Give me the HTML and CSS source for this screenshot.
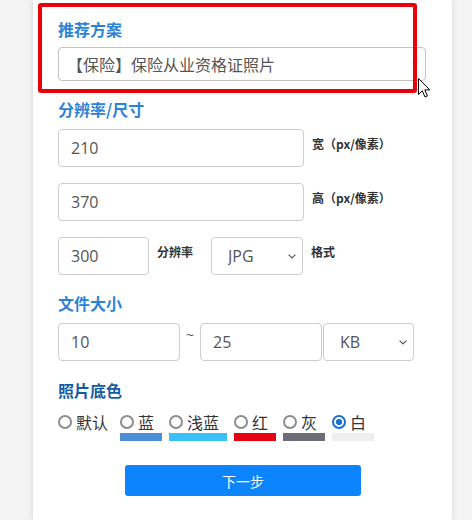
FILE: index.html
```html
<!DOCTYPE html>
<html lang="zh-CN">
<head>
<meta charset="utf-8">
<title>照片参数</title>
<link rel="stylesheet" href="styles.css">
</head>
<body>
<div class="page">
  <div class="card">
    <h2 class="title">推荐方案</h2>
    <div class="sel-wrap plan">
      <select class="sel plan-sel"><option>【保险】保险从业资格证照片</option></select>
      <span class="tri"></span>
    </div>

    <h2 class="title sec">分辨率/尺寸</h2>
    <div class="fields">
      <div class="row">
        <input class="inp w-wide" value="210">
        <span class="lab">宽（px/像素）</span>
      </div>
      <div class="row">
        <input class="inp w-wide" value="370">
        <span class="lab">高（px/像素）</span>
      </div>
      <div class="row">
        <input class="inp w-small" value="300">
        <span class="lab">分辨率</span>
        <div class="sel-wrap small fmt">
          <select class="sel"><option>JPG</option></select>
          <svg class="chev" width="8" height="5" viewBox="0 0 8 5"><path d="M0.6 0.6 L4 4 L7.4 0.6" fill="none" stroke="#555" stroke-width="1.2"/></svg>
        </div>
        <span class="lab">格式</span>
      </div>
    </div>

    <h2 class="title sec">文件大小</h2>
    <div class="row size-row">
      <input class="inp w-mid" value="10">
      <span class="tilde">~</span>
      <input class="inp w-mid" value="25">
      <div class="sel-wrap small unit">
        <select class="sel"><option>KB</option></select>
        <svg class="chev" width="8" height="5" viewBox="0 0 8 5"><path d="M0.6 0.6 L4 4 L7.4 0.6" fill="none" stroke="#555" stroke-width="1.2"/></svg>
      </div>
    </div>

    <h2 class="title sec dark">照片底色</h2>
    <div class="radios">
      <label class="opt first"><span class="opt-top"><input type="radio" name="bg" class="rd"><span class="opt-txt">默认</span></span></label>
      <label class="opt"><span class="opt-top"><input type="radio" name="bg" class="rd"><span class="opt-txt">蓝</span></span><span class="bar c-blue"></span></label>
      <label class="opt"><span class="opt-top"><input type="radio" name="bg" class="rd"><span class="opt-txt">浅蓝</span></span><span class="bar c-lblue"></span></label>
      <label class="opt"><span class="opt-top"><input type="radio" name="bg" class="rd"><span class="opt-txt">红</span></span><span class="bar c-red"></span></label>
      <label class="opt"><span class="opt-top"><input type="radio" name="bg" class="rd"><span class="opt-txt">灰</span></span><span class="bar c-gray"></span></label>
      <label class="opt"><span class="opt-top"><input type="radio" name="bg" class="rd" checked><span class="opt-txt">白</span></span><span class="bar c-white"></span></label>
    </div>

    <button class="next">下一步</button>
  </div>

  <div class="annot"></div>
  <svg class="cursor" width="13" height="20" viewBox="0 0 13 20">
    <path d="M0.5 0.5 L0.5 16.5 L4.3 12.8 L7 19 L9.4 18 L6.8 11.9 L11.8 11.9 Z" fill="#fff" stroke="#000" stroke-width="1" stroke-linejoin="round"/>
  </svg>
</div>
</body>
</html>
```
FILE: styles.css
```css
html, body {
  margin: 0;
  padding: 0;
}
body {
  background: #f4f4f4;
  font-family: "Open Sans", "Noto Sans CJK SC", sans-serif;
  overflow: hidden;
}
.page {
  position: relative;
  width: 472px;
  height: 520px;
}
.card {
  margin-left: 33px;
  width: 419px;
  height: 520px;
  box-sizing: border-box;
  background: #fff;
  box-shadow: 0 0 6px rgba(0, 0, 0, 0.14);
  padding: 18px 0 0 25px;
}
.title {
  margin: 0;
  font-family: "Noto Sans CJK SC", sans-serif;
  font-size: 16px;
  line-height: 22px;
  font-weight: 700;
  color: #2c83d6;
}
.title.sec {
  margin-top: 17px;
}
.title.dark {
  margin-top: 18px;
  color: #145da2;
}
.sel-wrap {
  position: relative;
}
.sel {
  appearance: none;
  -webkit-appearance: none;
  width: 100%;
  box-sizing: border-box;
  background: #fff;
  border: 1px solid #cfcfcf;
  border-radius: 4px;
  color: #555;
  font-family: "Open Sans", "Noto Sans CJK SC", sans-serif;
  font-size: 16px;
  outline: none;
}
.plan {
  margin-top: 7px;
  width: 368px;
}
.plan-sel {
  height: 34px;
  padding: 0 0 0 8px;
  border-color: #c2c2c2;
  font-family: "Noto Sans CJK SC", sans-serif;
}
.tri {
  position: absolute;
  right: 8px;
  top: 15px;
  width: 0;
  height: 0;
  border-left: 3px solid transparent;
  border-right: 3px solid transparent;
  border-top: 4px solid #b5b5b5;
}
.fields {
  margin-top: 9px;
  display: flex;
  flex-direction: column;
  gap: 16px;
}
.row {
  display: flex;
  align-items: flex-start;
}
.inp {
  height: 38px;
  box-sizing: border-box;
  border: 1px solid #cdcdcd;
  border-radius: 4px;
  padding: 0 12px;
  font-family: "Open Sans", "Noto Sans CJK SC", sans-serif;
  font-size: 16px;
  color: #555;
  background: #fff;
  outline: none;
}
.w-wide { width: 246px; }
.w-small { width: 91px; }
.w-mid { width: 122px; }
.lab {
  margin: 7px 0 0 8px;
  font-family: "Noto Sans CJK SC", sans-serif;
  font-size: 12px;
  line-height: 16px;
  font-weight: 700;
  color: #333;
}
.small .sel {
  height: 38px;
  padding: 0 0 0 16px;
}
.fmt {
  width: 92px;
  margin-left: 18px;
}
.unit {
  width: 91px;
  margin-left: 1px;
}
.chev {
  position: absolute;
  top: 17px;
  right: 7px;
}
.size-row {
  margin-top: 9px;
}
.tilde {
  width: 20px;
  text-align: center;
  font-size: 14px;
  line-height: 16px;
  color: #555;
  margin-top: 4px;
}
.radios {
  margin-top: 10px;
  display: flex;
  gap: 7px;
  align-items: flex-start;
}
.opt {
  display: flex;
  flex-direction: column;
}
.opt.first {
  margin-right: -3px;
}
.opt-top {
  display: flex;
  align-items: center;
  padding-right: 8px;
  height: 22px;
}
.rd {
  appearance: none;
  -webkit-appearance: none;
  margin: 0;
  width: 14px;
  height: 14px;
  box-sizing: border-box;
  border: 2px solid #8d8d8d;
  border-radius: 50%;
  background: #fff;
}
.rd:checked {
  border-color: #1b6fdc;
  background: radial-gradient(circle, #1b6fdc 0, #1b6fdc 2.8px, #fff 3.4px);
}
.opt-txt {
  margin-left: 4px;
  font-family: "Noto Sans CJK SC", sans-serif;
  font-size: 16px;
  line-height: 22px;
  color: #333;
}
.bar {
  height: 8px;
}
.c-blue { background: #4a8fd8; }
.c-lblue { background: #39c1f7; }
.c-red { background: #e50012; }
.c-gray { background: #6b6d79; }
.c-white { background: #eeeeee; }
.next {
  display: block;
  margin: 24px 0 0 67px;
  width: 236px;
  height: 31px;
  border: none;
  border-radius: 3px;
  background: #0b84fd;
  color: #fff;
  font-family: "Noto Sans CJK SC", sans-serif;
  font-size: 14px;
}
.annot {
  position: absolute;
  left: 38px;
  top: 3px;
  width: 379px;
  height: 90px;
  box-sizing: border-box;
  border: 4px solid #ea0009;
  border-radius: 3px;
  pointer-events: none;
}
.cursor {
  position: absolute;
  left: 418px;
  top: 78px;
}
```
